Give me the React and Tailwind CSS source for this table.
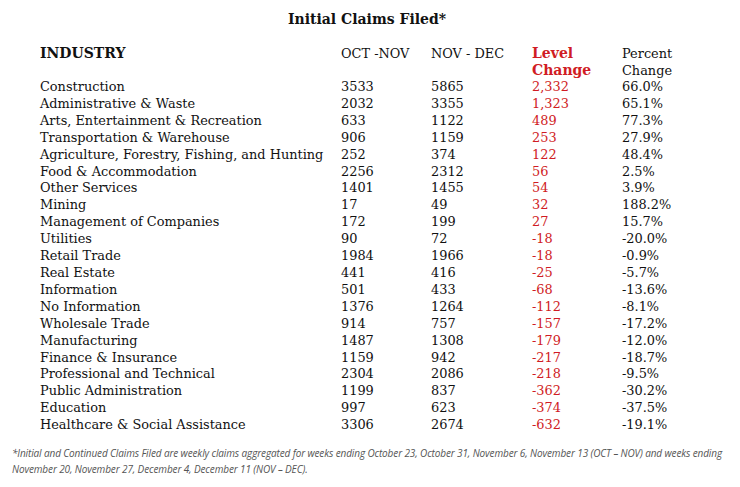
import React from "react";

const rows = [
  ["Construction", "3533", "5865", "2,332", "66.0%"],
  ["Administrative & Waste", "2032", "3355", "1,323", "65.1%"],
  ["Arts, Entertainment & Recreation", "633", "1122", "489", "77.3%"],
  ["Transportation & Warehouse", "906", "1159", "253", "27.9%"],
  ["Agriculture, Forestry, Fishing, and Hunting", "252", "374", "122", "48.4%"],
  ["Food & Accommodation", "2256", "2312", "56", "2.5%"],
  ["Other Services", "1401", "1455", "54", "3.9%"],
  ["Mining", "17", "49", "32", "188.2%"],
  ["Management of Companies", "172", "199", "27", "15.7%"],
  ["Utilities", "90", "72", "-18", "-20.0%"],
  ["Retail Trade", "1984", "1966", "-18", "-0.9%"],
  ["Real Estate", "441", "416", "-25", "-5.7%"],
  ["Information", "501", "433", "-68", "-13.6%"],
  ["No Information", "1376", "1264", "-112", "-8.1%"],
  ["Wholesale Trade", "914", "757", "-157", "-17.2%"],
  ["Manufacturing", "1487", "1308", "-179", "-12.0%"],
  ["Finance & Insurance", "1159", "942", "-217", "-18.7%"],
  ["Professional and Technical", "2304", "2086", "-218", "-9.5%"],
  ["Public Administration", "1199", "837", "-362", "-30.2%"],
  ["Education", "997", "623", "-374", "-37.5%"],
  ["Healthcare & Social Assistance", "3306", "2674", "-632", "-19.1%"],
];

const cols = "grid grid-cols-[301px_90px_101px_90px_1fr]";

export default function App() {
  return (
    <div className="w-[740px] h-[487px] bg-white text-[#111] overflow-hidden font-['DejaVu_Serif',serif]">
      <h1 className="pt-[9px] pr-[6px] text-center text-[14px] font-bold leading-[20px]">
        Initial Claims Filed*
      </h1>

      <div className="pl-[40px] pt-[16px] text-[12.9px] leading-[16.9px]">
        {/* header */}
        <div className={cols + " leading-[17px]"}>
          <div className="font-bold text-[14px]">INDUSTRY</div>
          <div>OCT -NOV</div>
          <div>NOV - DEC</div>
          <div className="font-bold text-[14px] text-[#d01c24]">
            Level
            <br />
            Change
          </div>
          <div>
            Percent
            <br />
            Change
          </div>
        </div>

        {/* body */}
        <div>
          {rows.map((r) => (
            <div key={r[0]} className={cols}>
              <div className="whitespace-nowrap">{r[0]}</div>
              <div>{r[1]}</div>
              <div>{r[2]}</div>
              <div className="text-[#d01c24]">{r[3]}</div>
              <div>{r[4]}</div>
            </div>
          ))}
        </div>
      </div>

      <p className="pl-[12px] pr-[4px] pt-[11px] text-[10px] tracking-[-0.12px] leading-[16px] italic text-[#555] font-['Open_Sans',sans-serif]">
        *Initial and Continued Claims Filed are weekly claims aggregated for weeks ending October 23, October 31, November 6, November 13 (OCT – NOV) and weeks ending November 20, November 27, December 4, December 11 (NOV – DEC).
      </p>
    </div>
  );
}
